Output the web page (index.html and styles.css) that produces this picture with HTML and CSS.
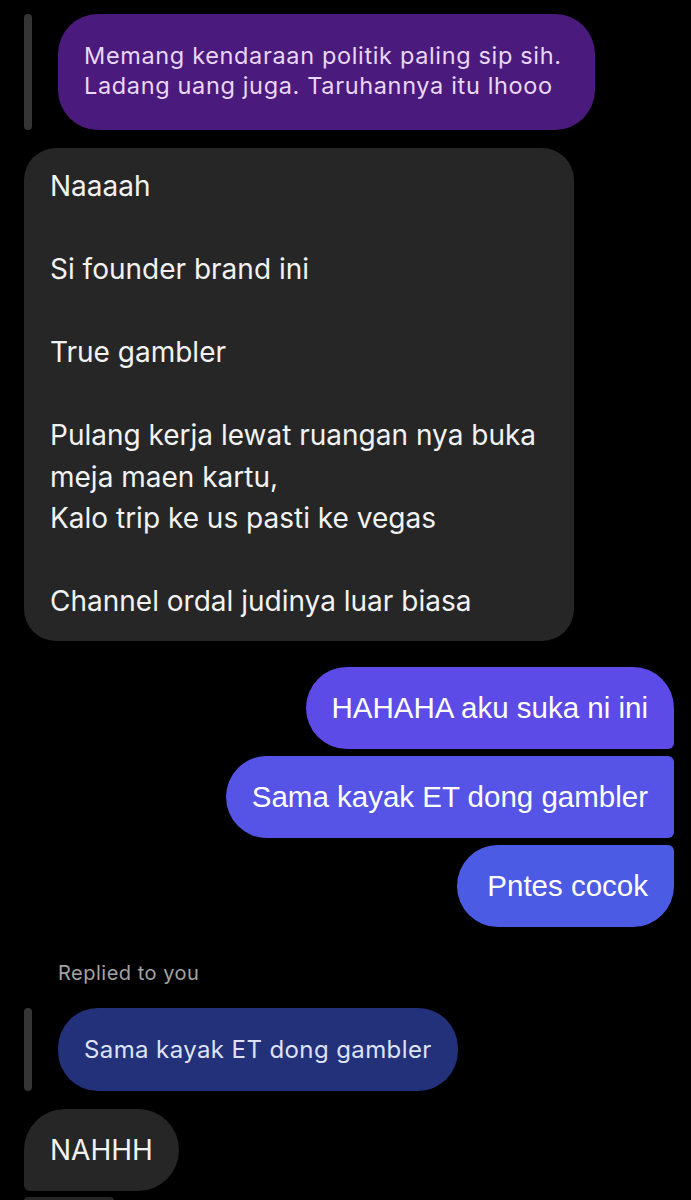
FILE: index.html
```html
<!DOCTYPE html>
<html>
<head>
<meta charset="utf-8">
<link rel="stylesheet" href="styles.css">
</head>
<body>
<div class="thread">
  <div class="quote-row quote-top">
    <div class="quote-bar"></div>
    <div class="quote-bubble quote-purple">
      <div class="line">Memang kendaraan politik paling sip sih.</div>
      <div class="line">Ladang uang juga. Taruhannya itu lhooo</div>
    </div>
  </div>

  <div class="bubble in in-big">
    <div class="line">Naaaah</div>
    <div class="line">&nbsp;</div>
    <div class="line">Si founder brand ini</div>
    <div class="line">&nbsp;</div>
    <div class="line">True gambler</div>
    <div class="line">&nbsp;</div>
    <div class="line">Pulang kerja lewat ruangan nya buka</div>
    <div class="line">meja maen kartu,</div>
    <div class="line">Kalo trip ke us pasti ke vegas</div>
    <div class="line">&nbsp;</div>
    <div class="line">Channel ordal judinya luar biasa</div>
  </div>

  <div class="sent-group">
    <div class="bubble out out-first">HAHAHA aku suka ni ini</div>
    <div class="bubble out out-mid">Sama kayak ET dong gambler</div>
    <div class="bubble out out-last">Pntes cocok</div>
  </div>

  <div class="replied-label">Replied to you</div>
  <div class="quote-row quote-bottom">
    <div class="quote-bar"></div>
    <div class="quote-bubble quote-navy">Sama kayak ET dong gambler</div>
  </div>

  <div class="in-group">
    <div class="bubble in in-first">NAHHH</div>
    <div class="bubble in in-next"></div>
  </div>
</div>
</body>
</html>
```
FILE: styles.css
```css
html, body {
  margin: 0;
  padding: 0;
  background: #000;
}
body {
  width: 691px;
  height: 1200px;
  overflow: hidden;
}
.thread {
  display: flex;
  flex-direction: column;
  align-items: flex-start;
  padding-top: 14px;
}
.line {
  white-space: nowrap;
}
.quote-row {
  display: flex;
  align-items: stretch;
  margin-left: 24px;
  gap: 26px;
}
.quote-bar {
  width: 8px;
  border-radius: 4px;
  background: #353535;
}
.quote-bubble {
  font-family: Inter, Roboto, "Liberation Sans", sans-serif;
  border-radius: 40px;
}
.quote-purple {
  width: 537px;
  box-sizing: border-box;
  background: #4a1b7c;
  color: #ead7f8;
  font-size: 23.5px;
  letter-spacing: 0.65px;
  line-height: 30px;
  padding: 27px 26px 29px;
}
.quote-navy {
  background: #23317a;
  color: #dfe2f7;
  font-size: 24px;
  letter-spacing: 0.4px;
  line-height: 33px;
  padding: 25px 26px;
  white-space: nowrap;
}
.bubble {
  box-sizing: border-box;
}
.in {
  background: #262626;
  color: #f2f2f2;
  font-family: Inter, Roboto, "Liberation Sans", sans-serif;
  font-size: 28px;
}
.in-big {
  margin-top: 18px;
  margin-left: 24px;
  width: 550px;
  padding: 18px 26px;
  line-height: 41.5px;
  border-radius: 32px;
}
.sent-group {
  align-self: flex-end;
  margin-top: 26px;
  margin-right: 17px;
  display: flex;
  flex-direction: column;
  align-items: flex-end;
  gap: 7px;
}
.out {
  color: #ffffff;
  font-family: "Liberation Sans", Arial, sans-serif;
  font-size: 29.5px;
  line-height: 34px;
  padding: 24px 26px;
  white-space: nowrap;
  border-radius: 41px 6px 6px 41px;
}
.out-first {
  background: #5c4be6;
  border-top-right-radius: 41px;
}
.out-mid {
  background: #5554e6;
}
.out-last {
  background: #4c5be3;
  border-bottom-right-radius: 41px;
  padding-left: 30px;
}
.replied-label {
  margin-top: 34px;
  margin-left: 58px;
  font-family: Inter, Roboto, "Liberation Sans", sans-serif;
  font-size: 20px;
  letter-spacing: 0.5px;
  line-height: 24px;
  color: #a3a3a3;
}
.quote-bottom {
  margin-top: 23px;
}
.in-group {
  margin-top: 18px;
  margin-left: 24px;
  display: flex;
  flex-direction: column;
  align-items: flex-start;
  gap: 6px;
}
.in-first {
  line-height: 34px;
  padding: 24px 26px;
  border-radius: 41px 41px 41px 6px;
}
.in-next {
  width: 90px;
  height: 4px;
  border-radius: 6px 6px 0 0;
}
```
